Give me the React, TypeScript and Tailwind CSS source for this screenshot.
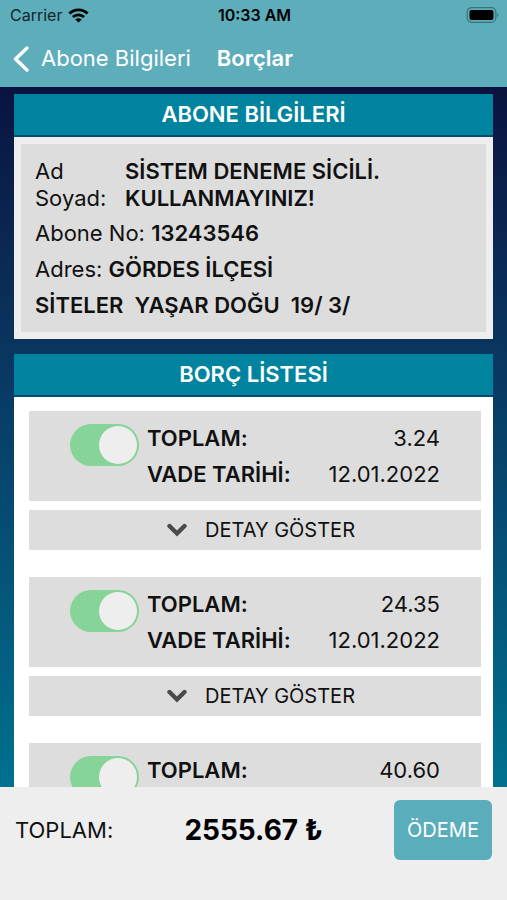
import { useState } from "react";

type Debt = {
  id: number;
  total: string;
  dueDate: string;
};

const debts: Debt[] = [
  { id: 1, total: "3.24", dueDate: "12.01.2022" },
  { id: 2, total: "24.35", dueDate: "12.01.2022" },
  { id: 3, total: "40.60", dueDate: "12.01.2022" },
];

const StatusBar = () => (
  <div className="grid grid-cols-3 items-center h-[30px] pl-[10px] pr-2 text-black">
    <div className="flex items-center gap-[6px] text-base text-[#10272c]">
      Carrier
      <svg width="21" height="15" viewBox="0 0 21 15" fill="none" stroke="#000" strokeWidth="2.8">
        <path d="M1.4 5.6C6.5.6 14.5.6 19.6 5.6" />
        <path d="M4.9 9.1c3.2-3 8-3 11.2 0" />
        <path d="M10.5 14.6 7.3 11.4c1.8-1.6 4.6-1.6 6.4 0z" fill="#000" stroke="none" />
      </svg>
    </div>
    <div className="text-center text-base font-semibold">10:33 AM</div>
    <svg className="justify-self-end" width="33" height="16" viewBox="0 0 33 16">
      <rect x="1.2" y="0.7" width="28.6" height="14.6" rx="4.4" fill="none" stroke="#3b747e" strokeWidth="1.2" />
      <rect x="3.5" y="3" width="24" height="10" rx="2" fill="#000" />
      <path d="M31.2 5.8c1.6.8 1.6 3.6 0 4.4z" fill="#3b747e" />
    </svg>
  </div>
);

const NavBar = () => (
  <nav className="flex items-center h-[57px] pl-3 text-[22px] text-white">
    <a href="#" className="flex items-center gap-[11px]">
      <svg width="18" height="26" viewBox="0 0 18 26" fill="none" stroke="currentColor" strokeWidth="3.4" strokeLinecap="round" strokeLinejoin="round">
        <path d="M15 2 3.5 13 15 24" />
      </svg>
      Abone Bilgileri
    </a>
    <h1 className="ml-[26px] font-semibold">Borçlar</h1>
  </nav>
);

const SectionTitle = ({ children }: { children: string }) => (
  <h2 className="h-[43px] border-b-2 border-[#064a6e] bg-[#00839e] text-center text-[22px] leading-[41px] font-semibold text-white">
    {children}
  </h2>
);

const DebtItem = ({ debt }: { debt: Debt }) => {
  const [selected, setSelected] = useState(true);
  const toggleId = `debt-${debt.id}`;

  return (
    <li>
      <div className="flex bg-[#ddd] py-[9px] pl-[41px] pr-[41px]">
        <input
          id={toggleId}
          type="checkbox"
          checked={selected}
          onChange={(e) => setSelected(e.target.checked)}
          className="mt-1 h-[42px] w-[69px] shrink-0 appearance-none rounded-full bg-gray-400 p-[2px] checked:bg-[#86d498] before:block before:size-[38px] before:rounded-full before:bg-[#eee] checked:before:ml-auto"
        />
        <div className="ml-2 flex-1 text-[22px] leading-[36px]">
          <div className="flex justify-between">
            <label htmlFor={toggleId} className="font-semibold">TOPLAM:</label>
            <span>{debt.total}</span>
          </div>
          <div className="flex justify-between">
            <span className="font-semibold">VADE TARİHİ:</span>
            <span>{debt.dueDate}</span>
          </div>
        </div>
      </div>
      <button type="button" className="mt-[9px] flex h-10 w-full items-center justify-center gap-[18px] bg-[#ddd] pl-3 text-xl">
        <svg width="20" height="14" viewBox="0 0 20 14" fill="none" stroke="#4a4a4a" strokeWidth="4.4" strokeLinecap="round">
          <path d="m2.5 3 7.5 7.5L17.5 3" />
        </svg>
        DETAY GÖSTER
      </button>
    </li>
  );
};

const App = () => {
  return (
    <div className="flex h-screen flex-col bg-[#eee] font-['Inter',sans-serif] text-[#111]">
      <header className="shrink-0 bg-[#5eadbb]">
        <StatusBar />
        <NavBar />
      </header>

      <main className="min-h-0 flex-1 overflow-y-auto bg-linear-to-b from-[#0a1340] via-[#07416a] to-[#00718f] px-[14px] pt-[7px] [scrollbar-width:none] [font-feature-settings:'calt'_0]">
        <section>
          <SectionTitle>ABONE BİLGİLERİ</SectionTitle>
          <div className="border-[7px] border-[#eee] bg-[#ddd] px-[14px] pt-[14px] pb-[9px] text-[22px] leading-[36px]">
            <div className="flex pb-[3px] leading-[27px]">
              <span className="w-[90px] shrink-0">Ad<br />Soyad:</span>
              <span className="font-semibold">SİSTEM DENEME SİCİLİ.<br />KULLANMAYINIZ!</span>
            </div>
            <p>
              Abone No: <span className="font-semibold">13243546</span>
            </p>
            <p className="whitespace-pre-wrap">
              Adres: <span className="font-semibold">GÖRDES İLÇESİ<br />SİTELER  YAŞAR DOĞU  19/ 3/</span>
            </p>
          </div>
        </section>

        <section className="mt-[15px]">
          <SectionTitle>BORÇ LİSTESİ</SectionTitle>
          <ul className="flex flex-col gap-[27px] bg-white pt-[14px] pr-3 pb-6 pl-[15px]">
            {debts.map((debt) => (
              <DebtItem key={debt.id} debt={debt} />
            ))}
          </ul>
        </section>
      </main>

      <footer className="flex h-[113px] shrink-0 items-start justify-between bg-[#eee] pt-[13px] pr-[15px] pl-[15px] [font-feature-settings:'calt'_0]">
        <span className="text-[22px] leading-[60px]">TOPLAM:</span>
        <strong className="text-[28px] leading-[60px] font-bold text-black">2555.67 ₺</strong>
        <button type="button" className="h-[60px] w-[98px] rounded-md bg-[#5aadbb] text-xl text-white">
          ÖDEME
        </button>
      </footer>
    </div>
  );
};

export default App;
